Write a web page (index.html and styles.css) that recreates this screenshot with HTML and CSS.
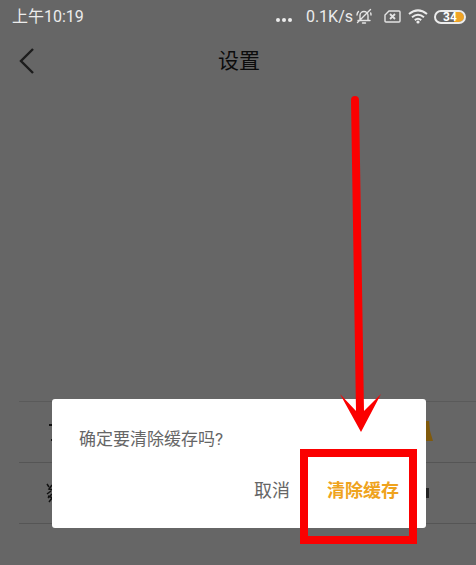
FILE: index.html
```html
<!DOCTYPE html>
<html lang="zh-CN">
<head>
    <meta charset="UTF-8">
    <meta name="viewport" content="width=device-width, initial-scale=1.0">
    <title>设置</title>
    <link rel="stylesheet" href="styles.css">
</head>
<body>
    <div class="status-bar">
        <span class="time">上午10:19</span>
        <div class="status-icons">
            <svg class="dots" width="18" height="18" viewBox="0 0 18 18" fill="#ececec">
                <circle cx="3" cy="12" r="2"/>
                <circle cx="9" cy="12" r="2"/>
                <circle cx="15" cy="12" r="2"/>
            </svg>
            <span class="speed">0.1K/s</span>
            <svg class="bell" width="18" height="18" viewBox="0 0 18 18" fill="none" stroke="#e4e4e4" stroke-width="1.4" stroke-linecap="round">
                <path d="M3 12.500h12M5 12.500V7.500a4 4 0 0 1 8 0v5M7.500 15h3M15.500 1.500L2.500 14.500M2 7q0-2 1.500-3.500M16 7q0-1-.3-2"/>
            </svg>
            <svg class="sim" width="17" height="18" viewBox="0 0 17 18" fill="none" stroke="#e4e4e4" stroke-width="1.400">
                <path d="M5 3h10q1 0 1 1v9q0 1-1 1H2q-1 0-1-1V7z"/>
                <path d="M6 6l5 5M11 6l-5 5" stroke-width="1.800"/>
            </svg>
            <svg class="wifi" width="20" height="18" viewBox="0 0 20 18" fill="none" stroke="#ececec" stroke-width="2">
                <path d="M1 6q9-7.200 18 0M4 9.200q6-4.800 12 0M6.800 12.100q3.200-2.600 6.400 0"/>
                <circle cx="10" cy="14" r="1.600" fill="#ececec" stroke="none"/>
            </svg>
            <span class="battery">34</span>
        </div>
    </div>
    <header class="header">
        <a class="back" href="#" aria-label="返回">
            <svg width="16" height="28" viewBox="0 0 16 28" fill="none" stroke="#1c1c1c" stroke-width="2.400">
                <path d="M14 2L2 14l12 12"/>
            </svg>
        </a>
        <h1>设置</h1>
    </header>
    <main class="settings">
        <ul class="list">
            <li>
                <svg width="10" height="28" viewBox="0 0 10 28" fill="#111">
                    <path d="M4 6h6v2H4zM6 21h4v2H6z"/>
                </svg>
                <svg width="10" height="28" viewBox="0 0 10 28" fill="#805a0c">
                    <path d="M0 3h3l1 10 3 10H0z"/>
                </svg>
            </li>
            <li>
                <svg width="10" height="28" viewBox="0 0 10 28" fill="none" stroke="#111" stroke-width="1.500">
                    <path d="M2 5l2 3M7 6L4 10l4 1M6 12l-4 3M7 15l-4 4M3 17l5 2M7 19l-3 4"/>
                </svg>
                <svg width="10" height="28" viewBox="0 0 10 28" fill="#222">
                    <path d="M0 9h3v10H0z"/>
                </svg>
            </li>
        </ul>
    </main>
    <div class="overlay">
        <div class="dialog" role="dialog" aria-labelledby="question">
            <p id="question">确定要清除缓存吗?</p>
            <div class="actions">
                <button type="button" class="cancel">取消</button>
                <button type="button" class="confirm">清除缓存</button>
            </div>
            <svg class="arrow" width="46" height="340" viewBox="0 0 46 340" fill="#fb0000">
                <path d="M13 7q0-4 4-4t4 4l5 311 17-17-20 38L2 301l16 17z"/>
            </svg>
            <span class="highlight"></span>
        </div>
    </div>
</body>
</html>
```
FILE: styles.css
```css
* {
    box-sizing: border-box;
}
body {
    margin: 0;
    min-height: 100vh;
    display: flex;
    flex-direction: column;
    position: relative;
    background: #666;
    font-family: Roboto, "Noto Sans CJK SC", sans-serif;
}
.status-bar {
    display: flex;
    justify-content: space-between;
    align-items: center;
    height: 34px;
    padding: 0 10px 0 12px;
    color: #ececec;
    font-size: 16px;
    line-height: 20px;
}
.status-icons {
    display: flex;
    align-items: center;
}
.speed {
    margin-left: 13px;
}
.bell {
    margin-left: 2px;
}
.sim {
    margin-left: 11px;
}
.wifi {
    margin-left: 7px;
}
.battery {
    width: 32px;
    height: 14px;
    margin-left: 6px;
    border: 2px solid #ececec;
    border-radius: 7px;
    background: linear-gradient(to right, #666 18px, #f0a426 18px);
    background-clip: padding-box;
    color: #fff;
    font-size: 12px;
    font-weight: bold;
    line-height: 10px;
    text-align: center;
}
.header {
    display: grid;
    grid-template-columns: 60px 1fr 58px;
    align-items: center;
    height: 54px;
}
.back {
    display: flex;
    padding-left: 19px;
}
.header h1 {
    margin: 0;
    color: #0c0c0c;
    font-size: 21px;
    font-weight: normal;
    line-height: 28px;
    text-align: center;
}
.settings {
    margin-top: auto;
    padding: 0 0 41px 19px;
}
.list {
    margin: 0;
    padding: 0;
    list-style: none;
    border-top: 1px solid #5a5a5a;
}
.list li {
    display: flex;
    justify-content: space-between;
    align-items: center;
    height: 61px;
    padding: 0 40px 0 26px;
    border-bottom: 1px solid #555;
}
.overlay {
    position: absolute;
    inset: 0;
    display: flex;
    align-items: flex-end;
    padding: 0 50px 37px 52px;
}
.dialog {
    position: relative;
    flex: 1;
    padding: 28px 27px 24px;
    border-radius: 3px;
    background: #fff;
}
.dialog p {
    margin: 0 0 27px;
    color: #666;
    font-size: 17px;
    line-height: 24px;
}
.actions {
    display: flex;
    justify-content: flex-end;
    gap: 37px;
}
.actions button {
    padding: 0;
    border: 0;
    background: none;
    font-family: inherit;
    font-size: 18px;
    line-height: 26px;
}
.cancel {
    color: #666;
}
.actions .confirm {
    color: #efa31d;
    font-weight: bold;
}
/* marks drawn over the dialog */
.arrow {
    position: absolute;
    right: 42px;
    bottom: 95px;
}
.highlight {
    position: absolute;
    right: 9px;
    bottom: -16px;
    width: 117px;
    height: 95px;
    border: 8px solid #fb0000;
}
```
